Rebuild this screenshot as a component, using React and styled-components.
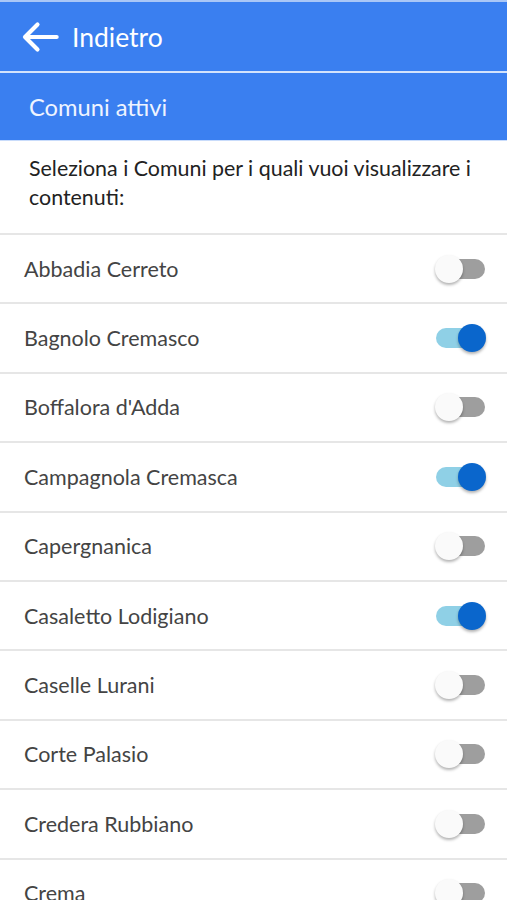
import React, { useState } from 'react';
import styled, { createGlobalStyle } from 'styled-components';

const Global = createGlobalStyle`
  html, body { margin: 0; padding: 0; background: #fff; }
  body { font-family: Lato, "Open Sans", sans-serif; }
`;

const Page = styled.div`
  width: 507px;
  height: 900px;
  overflow: hidden;
  background: #fff;
  border-top: 2px solid #a9c7f7;
`;

const TopBar = styled.div`
  height: 69px;
  background: #3a7ff0;
  display: flex;
  align-items: center;
  padding-left: 20px;
  gap: 12px;
  color: #fff;
  font-size: 26.5px;
  border-bottom: 2px solid #d3e3fc;
`;

const SubBar = styled.div`
  height: 67px;
  background: #3a7ff0;
  display: flex;
  align-items: center;
  padding-left: 29px;
  color: #eef4ff;
  font-size: 23.7px;
  border-bottom: 1px solid #c9dcfb;
`;

const Intro = styled.div`
  padding: 13px 29px 0;
  height: 79px;
  color: #222;
  font-size: 21.4px;
  line-height: 29px;
  border-bottom: 2px solid #e6e6e6;
`;

const Row = styled.div`
  height: 67.4px;
  display: flex;
  align-items: center;
  justify-content: space-between;
  padding: 0 22px 0 24px;
  border-bottom: 2px solid #e6e6e6;
  color: #444;
  font-size: 21.5px;
`;

const Track = styled.div`
  position: relative;
  width: 49px;
  height: 20px;
  border-radius: 10px;
  background: ${p => (p.on ? '#8fd0e6' : '#9e9e9e')};
  cursor: pointer;
`;

const Thumb = styled.div`
  position: absolute;
  top: -4px;
  left: ${p => (p.on ? '22px' : '-1px')};
  width: 28px;
  height: 28px;
  border-radius: 50%;
  background: ${p => (p.on ? '#0a66cc' : '#fafafa')};
  box-shadow: 0 2px 3px rgba(0, 0, 0, 0.3);
`;

const Arrow = () => (
  <svg width="40" height="40" viewBox="0 0 24 24" fill="none" stroke="#fff" strokeWidth="2.5" strokeLinecap="round" strokeLinejoin="round">
    <path d="M22 12H3M10.5 4.5L3 12l7.5 7.5" />
  </svg>
);

const Toggle = ({ on, onClick }) => (
  <Track on={on ? 1 : 0} onClick={onClick}>
    <Thumb on={on ? 1 : 0} />
  </Track>
);

const initial = [
  ['Abbadia Cerreto', false],
  ['Bagnolo Cremasco', true],
  ["Boffalora d'Adda", false],
  ['Campagnola Cremasca', true],
  ['Capergnanica', false],
  ['Casaletto Lodigiano', true],
  ['Caselle Lurani', false],
  ['Corte Palasio', false],
  ['Credera Rubbiano', false],
  ['Crema', false],
];

export default function App() {
  const [items, setItems] = useState(initial);
  const flip = i => setItems(items.map((it, j) => (j === i ? [it[0], !it[1]] : it)));
  return (
    <Page>
      <Global />
      <TopBar>
        <Arrow />
        <span>Indietro</span>
      </TopBar>
      <SubBar>Comuni attivi</SubBar>
      <Intro>Seleziona i Comuni per i quali vuoi visualizzare i contenuti:</Intro>
      {items.map(([name, on], i) => (
        <Row key={name}>
          <span>{name}</span>
          <Toggle on={on} onClick={() => flip(i)} />
        </Row>
      ))}
    </Page>
  );
}
